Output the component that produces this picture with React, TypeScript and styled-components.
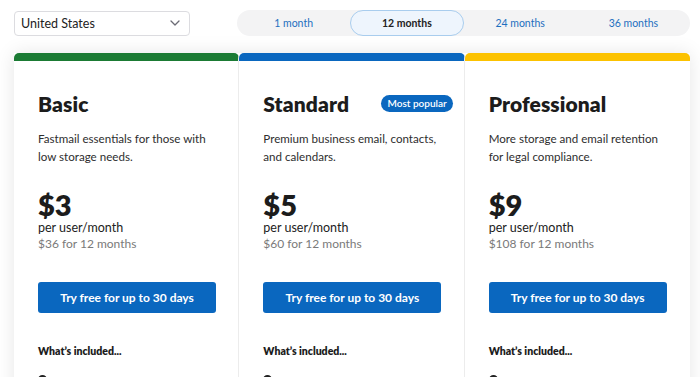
import React, {FunctionComponent, useState} from 'react';
import styled, {createGlobalStyle} from 'styled-components';

const GlobalStyle = createGlobalStyle`
  html, body {
    margin: 0;
    padding: 0;
    background: #fff;
    font-family: Lato, "Open Sans", Arial, sans-serif;
    color: #1c1c1c;
  }
`;

type Plan = {
  name: string
  accent: string
  description: string
  price: string
  total: string
  popular?: boolean
}

const plans: Plan[] = [
  {name: 'Basic', accent: '#1b7b34', description: 'Fastmail essentials for those with low storage needs.', price: '$3', total: '$36 for 12 months'},
  {name: 'Standard', accent: '#0a67bf', description: 'Premium business email, contacts, and calendars.', price: '$5', total: '$60 for 12 months', popular: true},
  {name: 'Professional', accent: '#fcc200', description: 'More storage and email retention for legal compliance.', price: '$9', total: '$108 for 12 months'},
];

const terms = ['1 month', '12 months', '24 months', '36 months'];

const Page = styled.div`
  padding: 10px 10px 0 14px;
  height: 377px;
  box-sizing: border-box;
  overflow: hidden;
`;

const Toolbar = styled.div`
  display: flex;
  align-items: center;
  justify-content: space-between;
  height: 26px;
`;

const Select = styled.div`
  width: 176px;
  height: 25px;
  box-sizing: border-box;
  border: 1px solid #dcdce0;
  border-radius: 4px;
  display: flex;
  align-items: center;
  justify-content: space-between;
  padding: 0 9px 0 6px;
  font-size: 12.5px;
  color: #222;
`;

const Toggle = styled.div`
  width: 453px;
  height: 26px;
  background: #f3f3f4;
  border-radius: 13px;
  display: grid;
  grid-template-columns: repeat(4, 1fr);
`;

const TermButton = styled.button<{ $active?: boolean }>`
  font: inherit;
  font-size: 10.5px;
  font-weight: ${p => (p.$active ? 700 : 400)};
  color: ${p => (p.$active ? '#222' : '#1d6fbf')};
  background: ${p => (p.$active ? '#eef5fd' : 'transparent')};
  border: 1px solid ${p => (p.$active ? '#a9cdee' : 'transparent')};
  border-radius: 13px;
  padding: 0;
  cursor: pointer;
`;

const Cards = styled.div`
  margin-top: 17px;
  display: grid;
  grid-template-columns: repeat(3, minmax(0, 1fr));
  box-shadow: 0 0 18px rgba(0, 0, 0, 0.1);
  width: 676px;
`;

const CardBox = styled.div<{ $accent: string; $last?: boolean }>`
  background: #fff;
  border-top: 8px solid ${p => p.$accent};
  border-radius: 5px 5px 0 0;
  border-right: ${p => (p.$last ? 'none' : '1px solid #ececec')};
  padding: 0 18px 0 24px;
  height: 340px;
  min-width: 0;
`;

const TitleRow = styled.div`
  display: flex;
  align-items: center;
  justify-content: space-between;
  margin-top: 29px;
  height: 26px;
`;

const Title = styled.h2`
  margin: 0;
  font-size: 21px;
  font-weight: 800;
  letter-spacing: 0.1px;
`;

const Badge = styled.span`
  background: #0a67bf;
  color: #fff;
  font-size: 10px;
  font-weight: 600;
  border-radius: 9px;
  padding: 2px 6px 3px;
  margin-right: -7px;
`;

const Description = styled.p`
  margin: 14px 0 0;
  font-size: 11.6px;
  line-height: 18px;
  color: #2e2e2e;
  height: 36px;
`;

const Price = styled.div`
  margin-top: 24px;
  font-size: 29px;
  font-weight: 800;
  line-height: 30px;
`;

const PerUser = styled.div`
  font-size: 12.5px;
  line-height: 16px;
  color: #222;
`;

const Total = styled.div`
  font-size: 12px;
  line-height: 16px;
  color: #7a7a7a;
`;

const TryButton = styled.button`
  margin-top: 30px;
  width: 178px;
  height: 31px;
  border: none;
  border-radius: 3px;
  background: #0a67bf;
  color: #fff;
  font: inherit;
  font-size: 12px;
  font-weight: 700;
`;

const Included = styled.div`
  margin-top: 32px;
  font-size: 10.5px;
  font-weight: 800;
`;

const Feature = styled.div`
  margin-top: 18px;
  height: 14px;
  display: flex;
  align-items: flex-start;
`;

const CheckCircle = styled.span`
  width: 9px;
  height: 9px;
  border-radius: 50%;
  border: 2px solid #222;
  box-sizing: border-box;
`;

const Chevron = () => (
  <svg width="10" height="6" viewBox="0 0 10 6" fill="none">
    <path d="M1 1l4 4 4-4" stroke="#6b6b75" strokeWidth="1.3" strokeLinecap="round" strokeLinejoin="round"/>
  </svg>
);

const Card: FunctionComponent<{ plan: Plan; last?: boolean }> = ({plan, last}) => (
  <CardBox $accent={plan.accent} $last={last}>
    <TitleRow>
      <Title>{plan.name}</Title>
      {plan.popular && <Badge>Most popular</Badge>}
    </TitleRow>
    <Description>{plan.description}</Description>
    <Price>{plan.price}</Price>
    <PerUser>per user/month</PerUser>
    <Total>{plan.total}</Total>
    <TryButton>Try free for up to 30 days</TryButton>
    <Included>What’s included...</Included>
    <Feature><CheckCircle/></Feature>
  </CardBox>
);

const App = () => {
  const [term, setTerm] = useState('12 months');
  return (
    <Page>
      <GlobalStyle/>
      <Toolbar>
        <Select>
          <span>United States</span>
          <Chevron/>
        </Select>
        <Toggle>
          {terms.map(t => (
            <TermButton key={t} $active={t === term} onClick={() => setTerm(t)}>{t}</TermButton>
          ))}
        </Toggle>
      </Toolbar>
      <Cards>
        {plans.map((p, i) => <Card key={p.name} plan={p} last={i === plans.length - 1}/>)}
      </Cards>
    </Page>
  );
};

export default App;
